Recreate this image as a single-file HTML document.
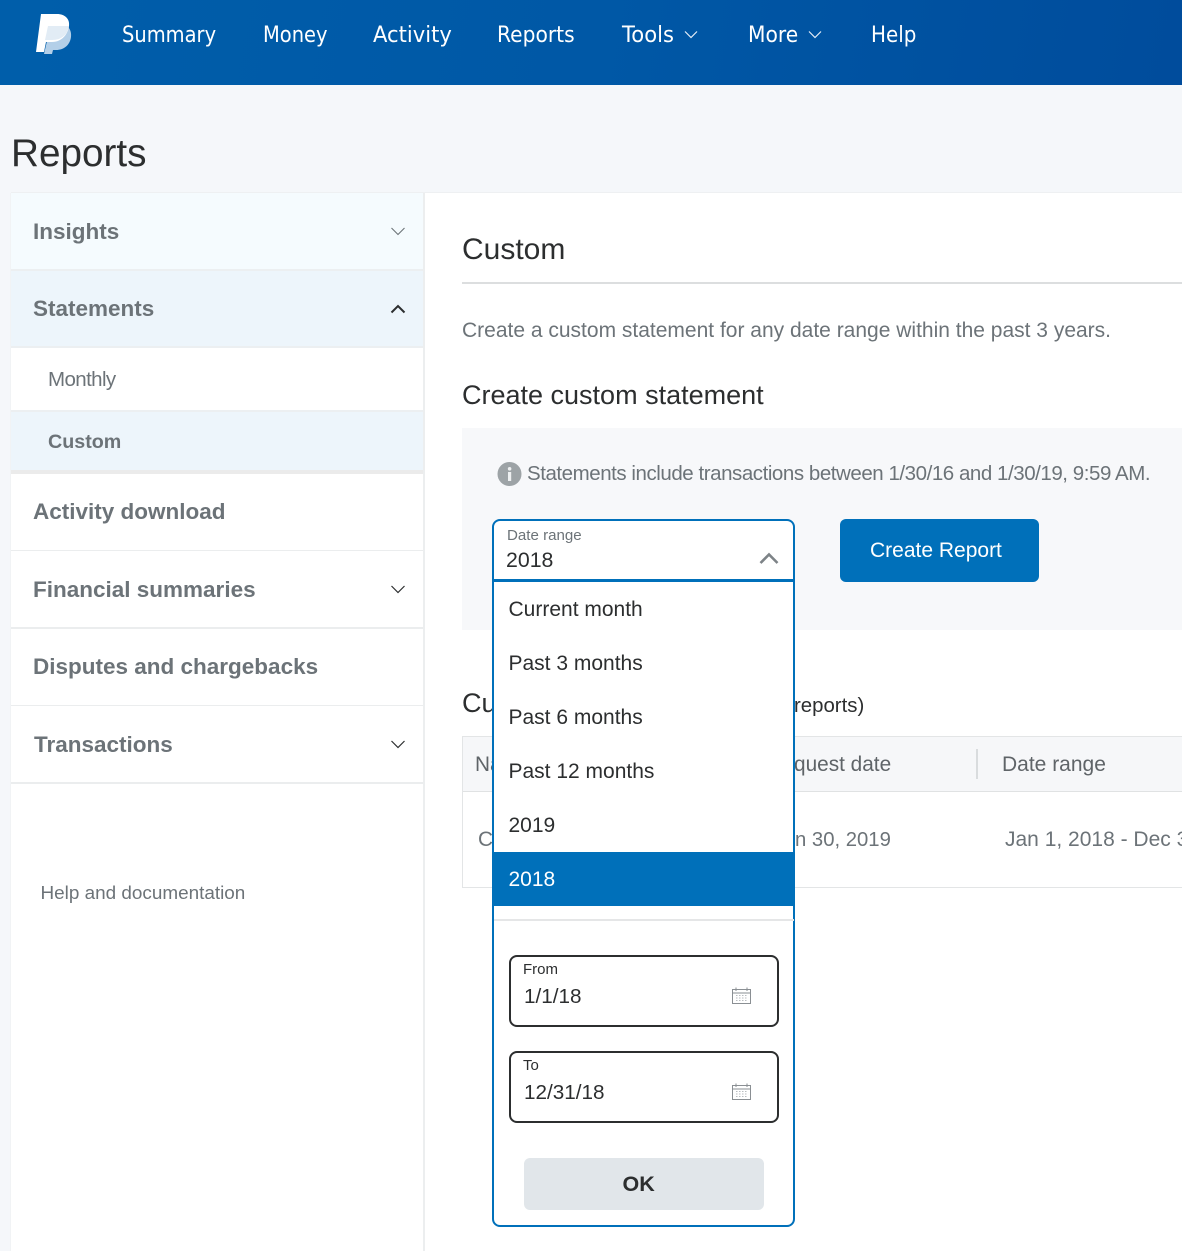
<!DOCTYPE html>
<html><head><meta charset="utf-8"><style>
*{box-sizing:border-box}
html,body{margin:0;padding:0;width:1182px;height:1251px;overflow:hidden;background:#f5f7fa}
body{position:relative;font-family:"Liberation Sans",Arial,sans-serif}
.a{position:absolute}
.t{position:absolute;white-space:nowrap;line-height:1}
.nav{position:absolute;top:0;left:0;width:1182px;height:85px;background:linear-gradient(100deg,#005eaa 0%,#0058a6 50%,#004c9c 100%)}
.n{position:absolute;top:23px;color:#fff;font-family:"DejaVu Sans",sans-serif;font-size:22px;line-height:25px;white-space:nowrap;transform-origin:0 0}
.s{color:#6c7378;font-weight:700;font-size:22.5px}
.o{color:#2c2e2f;font-size:21px;left:508.5px}
svg{position:absolute;overflow:visible}
</style></head><body>
<div class="nav">
<svg style="left:0;top:0" width="100" height="85" viewBox="0 0 100 85">
<path d="M51 24H60C67 24 72 29 71 37C70 45 64 50 56 50H53L52 54H44Z" fill="#b3cfe8"/>
<path d="M41 14H57C65 14 70 19 69 26C68 34 62 42 52 42H46L44 52H36Z" fill="#fff"/>
<path d="M48 26H69C68 34 62 40 52 40H45Z" fill="#e2ecf5"/>
</svg>
<div class="n" style="left:122px;transform:scaleX(.885)">Summary</div>
<div class="n" style="left:263px;transform:scaleX(.885)">Money</div>
<div class="n" style="left:373px;transform:scaleX(.958)">Activity</div>
<div class="n" style="left:497px;transform:scaleX(.92)">Reports</div>
<div class="n" style="left:622px;transform:scaleX(.959)">Tools</div>
<div class="n" style="left:748px;transform:scaleX(.92)">More</div>
<div class="n" style="left:871px;transform:scaleX(.905)">Help</div>
<svg style="left:684px;top:30px" width="14" height="9" viewBox="0 0 14 9"><path d="M1 1.5L7 7.5L13 1.5" fill="none" stroke="#e5eef7" stroke-width="1.2"/></svg>
<svg style="left:808px;top:30px" width="14" height="9" viewBox="0 0 14 9"><path d="M1 1.5L7 7.5L13 1.5" fill="none" stroke="#e5eef7" stroke-width="1.2"/></svg>
</div>

<div class="t" style="left:11px;top:131px;font-size:38.7px;line-height:45px;color:#2c2e2f">Reports</div>

<!-- sidebar -->
<div class="a" style="left:11px;top:193px;width:414px;height:1058px;background:#fff;border-right:2px solid #eceeef"></div>
<div class="a" style="left:11px;top:193px;width:412px;height:76px;background:#f5fbfe"></div>
<div class="a" style="left:11px;top:269px;width:412px;height:2px;background:#eceff1"></div>
<div class="a" style="left:11px;top:271px;width:412px;height:75px;background:#edf5fb"></div>
<div class="a" style="left:11px;top:346px;width:412px;height:2px;background:#eceff1"></div>
<div class="a" style="left:11px;top:410px;width:412px;height:2px;background:#eceff1"></div>
<div class="a" style="left:11px;top:412px;width:412px;height:58px;background:#edf5fb"></div>
<div class="a" style="left:11px;top:470px;width:412px;height:4px;background:#ebebeb"></div>
<div class="a" style="left:11px;top:550px;width:412px;height:1px;background:#ebedee"></div>
<div class="a" style="left:11px;top:627px;width:412px;height:2px;background:#ebedee"></div>
<div class="a" style="left:11px;top:705px;width:412px;height:1px;background:#ebedee"></div>
<div class="a" style="left:11px;top:782px;width:412px;height:2px;background:#ebedee"></div>

<div class="t s" style="left:33px;top:221px">Insights</div>
<div class="t s" style="left:33px;top:298px">Statements</div>
<div class="t" style="left:48px;top:370px;font-size:20.5px;letter-spacing:-.6px;color:#6c7378">Monthly</div>
<div class="t" style="left:48px;top:433px;font-size:19.7px;font-weight:700;color:#6c7378">Custom</div>
<div class="t s" style="left:33px;top:501px">Activity download</div>
<div class="t s" style="left:33px;top:579px">Financial summaries</div>
<div class="t s" style="left:33px;top:656px">Disputes and chargebacks</div>
<div class="t s" style="left:34px;top:734px">Transactions</div>
<div class="t" style="left:40.5px;top:885px;font-size:18.9px;color:#6c7378">Help and documentation</div>

<svg style="left:391px;top:227px" width="14" height="9" viewBox="0 0 14 9"><path d="M.5 1L7 7.5L13.5 1" fill="none" stroke="#6c7378" stroke-width="1.1"/></svg>
<svg style="left:390px;top:304px" width="16" height="10" viewBox="0 0 16 10"><path d="M1.5 8.5L8 2L14.5 8.5" fill="none" stroke="#2c2e2f" stroke-width="2"/></svg>
<svg style="left:391px;top:585px" width="14" height="9" viewBox="0 0 14 9"><path d="M.5 1L7 7.5L13.5 1" fill="none" stroke="#2c2e2f" stroke-width="1.2"/></svg>
<svg style="left:391px;top:740px" width="14" height="9" viewBox="0 0 14 9"><path d="M.5 1L7 7.5L13.5 1" fill="none" stroke="#2c2e2f" stroke-width="1.2"/></svg>

<!-- main -->
<div class="a" style="left:425px;top:193px;width:757px;height:1058px;background:#fff"></div>
<div class="a" style="left:11px;top:192px;width:1171px;height:1px;background:#eef0f2"></div>
<div class="a" style="left:10px;top:193px;width:1px;height:1058px;background:#f1f3f5"></div>
<div class="t" style="left:462px;top:233px;font-size:30px;line-height:34px;color:#2c2e2f">Custom</div>
<div class="a" style="left:462px;top:282px;width:720px;height:2px;background:#dcdedf"></div>
<div class="t" style="left:462px;top:319px;font-size:21px;line-height:23px;color:#6c7378">Create a custom statement for any date range within the past 3 years.</div>
<div class="t" style="left:462px;top:380px;font-size:27px;line-height:31px;color:#2c2e2f">Create custom statement</div>

<div class="a" style="left:462px;top:428px;width:720px;height:202px;background:#f7f8fa"></div>
<svg style="left:497px;top:462px" width="25" height="25" viewBox="0 0 25 25"><circle cx="12.5" cy="12" r="12" fill="#9da3a6"/><rect x="11" y="10" width="3.2" height="9" fill="#eef0f1"/><circle cx="12.6" cy="6.8" r="1.8" fill="#eef0f1"/></svg>
<div class="t" style="left:527px;top:462px;font-size:20.5px;line-height:23px;letter-spacing:-.45px;color:#6c7378">Statements include transactions between 1/30/16 and 1/30/19, 9:59 AM.</div>

<div class="a" style="left:840px;top:519px;width:199px;height:63px;background:#0070ba;border-radius:6px"></div>
<div class="t" style="left:870px;top:539px;font-size:21px;line-height:23px;color:#fff">Create Report</div>

<!-- table -->
<div class="t" style="left:462px;top:688px;font-size:27px;line-height:31px;color:#2c2e2f">Cu</div>
<div class="t" style="left:794px;top:695px;font-size:20.4px;line-height:23px;color:#2c2e2f">reports)</div>
<div class="a" style="left:462px;top:736px;width:720px;height:152px;background:#fff;border:solid #e3e5e6;border-width:1px 0 1px 1px"></div>
<div class="a" style="left:463px;top:737px;width:719px;height:55px;background:#f6f7f9;border-bottom:1px solid #e0e2e3"></div>
<div class="a" style="left:976px;top:749px;width:2px;height:30px;background:#d9dcde"></div>
<div class="t" style="left:475px;top:753px;font-size:20.8px;line-height:23px;color:#5f6468">Na</div>
<div class="t" style="left:794px;top:753px;font-size:20.8px;line-height:23px;color:#5f6468">quest date</div>
<div class="t" style="left:1002px;top:753px;font-size:21px;line-height:23px;color:#5f6468">Date range</div>
<div class="t" style="left:478px;top:828px;font-size:20.8px;line-height:23px;color:#6c7378">C</div>
<div class="t" style="left:795px;top:829px;font-size:20.3px;line-height:23px;color:#6c7378">n 30, 2019</div>
<div class="t" style="left:1005px;top:828px;width:177px;overflow:hidden;font-size:21px;line-height:23px;color:#6c7378">Jan 1, 2018 - Dec 31, 2018</div>

<!-- dropdown -->
<div class="a" style="left:492px;top:519px;width:303px;height:708px;background:#fff;border:2px solid #0070ba;border-radius:8px"></div>
<div class="a" style="left:494px;top:579px;width:299px;height:3px;background:#0070ba"></div>
<div class="t" style="left:507px;top:527px;font-size:15.1px;line-height:18px;color:#6c7378">Date range</div>
<div class="t" style="left:506px;top:548px;font-size:21.3px;line-height:25px;color:#2c2e2f">2018</div>
<svg style="left:759px;top:552px" width="20" height="13" viewBox="0 0 20 13"><path d="M1.5 11L10 2.5L18.5 11" fill="none" stroke="#7d8387" stroke-width="2.6"/></svg>
<div class="t o" style="top:598px;line-height:24px">Current month</div>
<div class="t o" style="top:652px;line-height:24px">Past 3 months</div>
<div class="t o" style="top:706px;line-height:24px">Past 6 months</div>
<div class="t o" style="top:760px;line-height:24px">Past 12 months</div>
<div class="t o" style="top:814px;line-height:24px">2019</div>
<div class="a" style="left:492px;top:852px;width:303px;height:54px;background:#0070ba"></div>
<div class="t o" style="top:868px;line-height:24px;color:#fff">2018</div>
<div class="a" style="left:494px;top:919px;width:300px;height:2px;background:#e5e6e7"></div>

<div class="a" style="left:509px;top:955px;width:270px;height:72px;background:#fff;border:2px solid #2c2e2f;border-radius:8px"></div>
<div class="t" style="left:523px;top:961px;font-size:15px;line-height:18px;color:#2c2e2f">From</div>
<div class="t" style="left:524px;top:985px;font-size:20.7px;line-height:24px;color:#2c2e2f">1/1/18</div>
<svg style="left:732px;top:987px" width="19" height="17" viewBox="0 0 19 17"><path d="M.5 2.5H18.5V16.5H.5ZM.5 6H18.5M4 .5V4M15 .5V4" fill="none" stroke="#8a8f93" stroke-width="1"/><path d="M4 8.5h11M4 11h11M4 13.5h11" stroke="#b9bdc0" stroke-width="1" stroke-dasharray="1.5 1.5"/></svg>
<div class="a" style="left:509px;top:1051px;width:270px;height:72px;background:#fff;border:2px solid #2c2e2f;border-radius:8px"></div>
<div class="t" style="left:523px;top:1057px;font-size:15px;line-height:18px;color:#2c2e2f">To</div>
<div class="t" style="left:524px;top:1081px;font-size:20.7px;line-height:24px;color:#2c2e2f">12/31/18</div>
<svg style="left:732px;top:1083px" width="19" height="17" viewBox="0 0 19 17"><path d="M.5 2.5H18.5V16.5H.5ZM.5 6H18.5M4 .5V4M15 .5V4" fill="none" stroke="#8a8f93" stroke-width="1"/><path d="M4 8.5h11M4 11h11M4 13.5h11" stroke="#b9bdc0" stroke-width="1" stroke-dasharray="1.5 1.5"/></svg>

<div class="a" style="left:524px;top:1158px;width:240px;height:52px;background:#e1e6ea;border-radius:6px"></div>
<div class="t" style="left:622.5px;top:1172px;font-size:21.5px;line-height:24px;font-weight:700;color:#2c2e2f">OK</div>
</body></html>
